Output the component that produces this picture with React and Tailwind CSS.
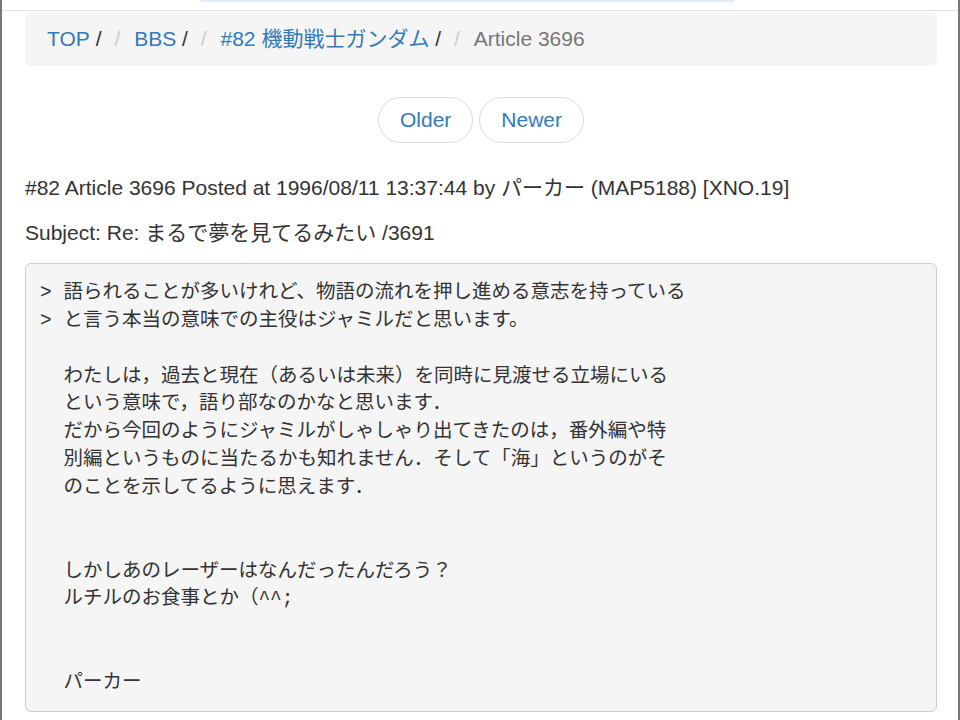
const crumbs = [
  { label: "TOP", href: "#" },
  { label: "BBS", href: "#" },
  { label: "#82 機動戦士ガンダム", href: "#" },
];

const body = [
  "> 語られることが多いけれど、物語の流れを押し進める意志を持っている",
  "> と言う本当の意味での主役はジャミルだと思います。",
  "",
  "  わたしは，過去と現在（あるいは未来）を同時に見渡せる立場にいる",
  "  という意味で，語り部なのかなと思います．",
  "  だから今回のようにジャミルがしゃしゃり出てきたのは，番外編や特",
  "  別編というものに当たるかも知れません．そして「海」というのがそ",
  "  のことを示してるように思えます．",
  "",
  "",
  "  しかしあのレーザーはなんだったんだろう？",
  "  ルチルのお食事とか（^^;",
  "",
  "",
  "  パーカー",
].join("\n");

export default function App() {
  return (
    <div className="h-[720px] overflow-hidden border-x-2 border-[#777] bg-white font-['Liberation_Sans','Noto_Sans_CJK_JP',sans-serif] text-[21px] leading-[30px] text-[#333]">
      <div className="h-[11px] border-b border-[#ddd]">
        <div className="ml-[198px] h-[2px] w-[535px] rounded-b bg-[#e6ecf7]" />
      </div>

      <div className="pl-[23px] pr-[21px] pt-[1px]">
        <ol className="flex items-center rounded-[6px] bg-[#f5f5f5] px-[22px] py-[12px]">
          {crumbs.map((c) => (
            <li key={c.label} className="flex items-center">
              <a href={c.href} className="text-[#337ab7]">
                {c.label}
              </a>
              <span className="whitespace-pre"> /</span>
              <span className="whitespace-pre pl-[13px] pr-[8px] text-[#ccc]">/ </span>
            </li>
          ))}
          <li className="text-[#777]">Article 3696</li>
        </ol>

        <ul className="mb-[30px] mt-[31px] flex justify-center gap-[6px]">
          <li>
            <a
              href="#"
              className="block rounded-full border border-[#ddd] bg-white px-[21px] py-[7px] text-[#337ab7]"
            >
              Older
            </a>
          </li>
          <li>
            <a
              href="#"
              className="block rounded-full border border-[#ddd] bg-white px-[21px] py-[7px] text-[#337ab7]"
            >
              Newer
            </a>
          </li>
        </ul>

        <p className="mb-[15px]">
          #82 Article 3696 Posted at 1996/08/11 13:37:44 by パーカー (MAP5188) [XNO.19]
        </p>
        <p className="mb-[15px]">Subject: Re: まるで夢を見てるみたい /3691</p>

        <pre className="rounded-[6px] border border-[#ccc] bg-[#f5f5f5] pb-[13px] pl-[14px] pr-[14px] pt-[16px] font-['Liberation_Mono','Noto_Sans_CJK_JP',monospace] text-[19.5px] leading-[27.86px] text-[#333]">
          {body}
        </pre>
      </div>
    </div>
  );
}
